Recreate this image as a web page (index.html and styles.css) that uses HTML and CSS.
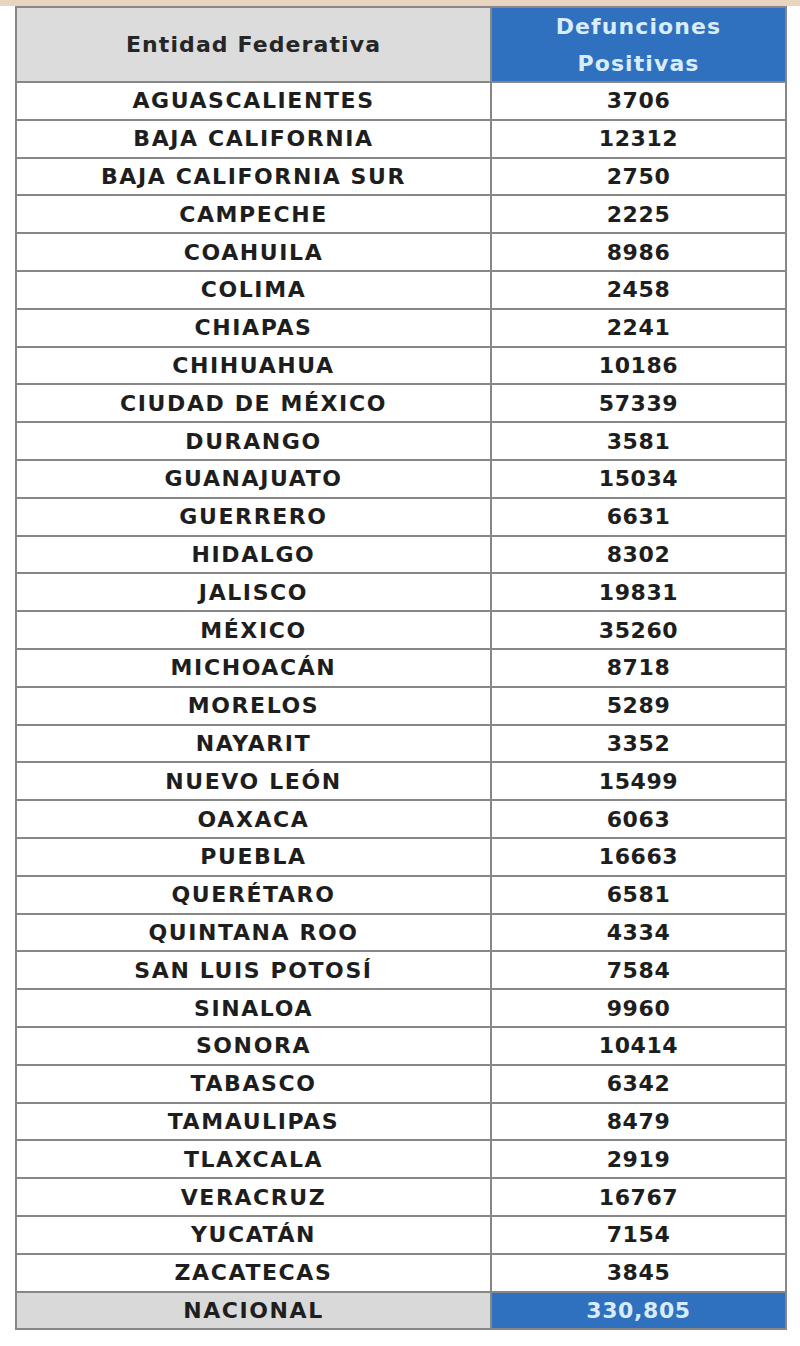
FILE: index.html
```html
<!DOCTYPE html>
<html lang="es">
<head>
<meta charset="utf-8">
<title>Defunciones positivas por entidad federativa</title>
<link rel="stylesheet" href="styles.css">
</head>
<body>
<div class="strip"></div>
<div class="table">
  <div class="cell head">Entidad Federativa</div>
  <div class="cell head blue">Defunciones<br>Positivas</div>
  <div class="cell">AGUASCALIENTES</div><div class="cell num">3706</div>
  <div class="cell">BAJA CALIFORNIA</div><div class="cell num">12312</div>
  <div class="cell">BAJA CALIFORNIA SUR</div><div class="cell num">2750</div>
  <div class="cell">CAMPECHE</div><div class="cell num">2225</div>
  <div class="cell">COAHUILA</div><div class="cell num">8986</div>
  <div class="cell">COLIMA</div><div class="cell num">2458</div>
  <div class="cell">CHIAPAS</div><div class="cell num">2241</div>
  <div class="cell">CHIHUAHUA</div><div class="cell num">10186</div>
  <div class="cell">CIUDAD DE MÉXICO</div><div class="cell num">57339</div>
  <div class="cell">DURANGO</div><div class="cell num">3581</div>
  <div class="cell">GUANAJUATO</div><div class="cell num">15034</div>
  <div class="cell">GUERRERO</div><div class="cell num">6631</div>
  <div class="cell">HIDALGO</div><div class="cell num">8302</div>
  <div class="cell">JALISCO</div><div class="cell num">19831</div>
  <div class="cell">MÉXICO</div><div class="cell num">35260</div>
  <div class="cell">MICHOACÁN</div><div class="cell num">8718</div>
  <div class="cell">MORELOS</div><div class="cell num">5289</div>
  <div class="cell">NAYARIT</div><div class="cell num">3352</div>
  <div class="cell">NUEVO LEÓN</div><div class="cell num">15499</div>
  <div class="cell">OAXACA</div><div class="cell num">6063</div>
  <div class="cell">PUEBLA</div><div class="cell num">16663</div>
  <div class="cell">QUERÉTARO</div><div class="cell num">6581</div>
  <div class="cell">QUINTANA ROO</div><div class="cell num">4334</div>
  <div class="cell">SAN LUIS POTOSÍ</div><div class="cell num">7584</div>
  <div class="cell">SINALOA</div><div class="cell num">9960</div>
  <div class="cell">SONORA</div><div class="cell num">10414</div>
  <div class="cell">TABASCO</div><div class="cell num">6342</div>
  <div class="cell">TAMAULIPAS</div><div class="cell num">8479</div>
  <div class="cell">TLAXCALA</div><div class="cell num">2919</div>
  <div class="cell">VERACRUZ</div><div class="cell num">16767</div>
  <div class="cell">YUCATÁN</div><div class="cell num">7154</div>
  <div class="cell">ZACATECAS</div><div class="cell num">3845</div>
  <div class="cell total">NACIONAL</div><div class="cell num total blue">330,805</div>
</div>
</body>
</html>
```
FILE: styles.css
```css
html, body {
  margin: 0;
  padding: 0;
  background: #ffffff;
}
body {
  font-family: "DejaVu Sans", "Liberation Sans", sans-serif;
  font-weight: bold;
  color: #1e1e1e;
}
.strip {
  height: 6px;
  background: #e9d5bf;
}
.table {
  margin-left: 15px;
  width: 772px;
  box-sizing: border-box;
  padding: 2px;
  display: grid;
  grid-template-columns: 473px 293px;
  grid-template-rows: 73px;
  grid-auto-rows: 35.8px;
  gap: 2px;
  background: #878787;
}
.cell {
  background: #ffffff;
  display: flex;
  align-items: center;
  justify-content: center;
  text-align: center;
  font-size: 22px;
  letter-spacing: 1.6px;
  white-space: nowrap;
}
.head {
  background: #dcdcdc;
  font-size: 22px;
  letter-spacing: 1.1px;
  color: #262626;
  line-height: 37px;
}
.blue {
  background: #2f70bf;
  color: #d8ecfb;
}
.num {
  letter-spacing: 0.6px;
}
.total {
  background: #d9d9d9;
}
.total.blue {
  background: #2f70bf;
}
```
